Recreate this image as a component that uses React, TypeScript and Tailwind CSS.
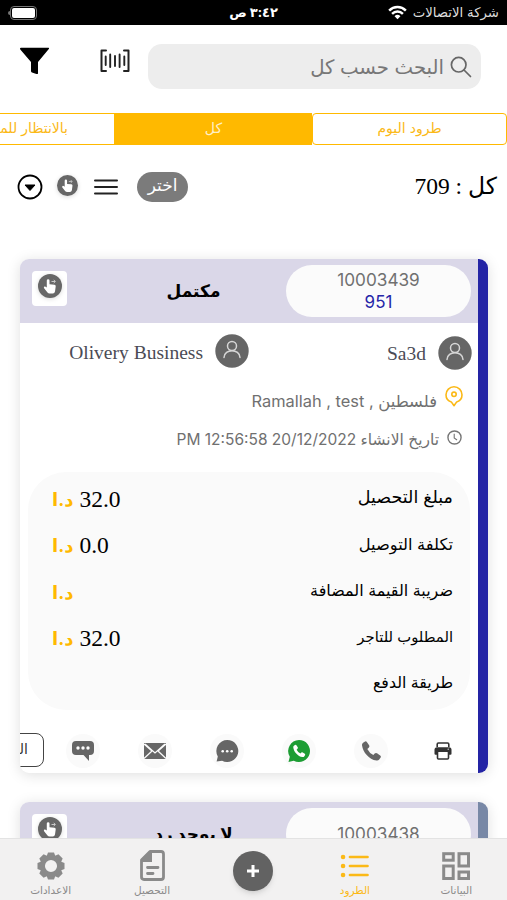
import type { ReactNode } from "react";
import clsx from "clsx";

/* ---------- icons ---------- */

const FilterIcon = () => (
  <svg viewBox="0 0 30 28" className="h-7 w-[30px]">
    <path d="M0 1.500Q0 .8 1 .8H28.500Q29.300.8 29 1.800L18 15V26.500Q17.600 27.300 16.500 27L12 25.500Q11 25 11 24V15L.3 2.500Z" fill="#000" />
  </svg>
);

const BarcodeIcon = () => (
  <svg viewBox="0 0 30 24" className="h-6 w-[30px]" fill="none" stroke="#222" strokeWidth="2" strokeLinecap="round" strokeLinejoin="round">
    <path d="M6 1.500H1.500V22H6M24 1.500H28.500V22H24" />
    <path d="M5.700 7.500V16M10.200 5.500V18M15 7V17M19.600 5.500V18M24.300 7.500V16" strokeWidth="1.900" />
  </svg>
);

const WifiIcon = () => (
  <svg viewBox="0 0 20 15" className="h-[15px] w-[19px]" fill="none" stroke="#fff" strokeWidth="2.600">
    <path d="M1.200 5.400a12.500 12.500 0 0 1 17.600 0M4.300 8.900a8 8 0 0 1 11.400 0" />
    <path d="M10 14.500 6.900 11.500a4.400 4.400 0 0 1 6.200 0Z" fill="#fff" stroke="none" />
  </svg>
);

const SearchIcon = () => (
  <svg viewBox="0 0 22 22" className="h-[22px] w-[22px]" fill="none" stroke="#666" strokeWidth="1.700" strokeLinecap="round">
    <circle cx="8.700" cy="8.700" r="7.300" />
    <path d="m14 14 6.500 6.500" />
  </svg>
);

const HandIcon = ({ className }: { className?: string }) => (
  <svg viewBox="0 0 24 24" className={clsx("drop-shadow-sm", className)}>
    <circle cx="12" cy="12" r="12" fill="#676767" />
    <path d="M8.800 6.500a1.350 1.350 0 0 1 2.700 0V10.200l5 .5q1.400.3 1.200 1.700L17 17.500q-.4 1.900-2.200 1.900h-3.300q-1.200 0-2-.9l-3.400-4.200q-.7-1.200.3-1.800.8-.4 2.400 1Z" fill="#fff" />
    <path d="M13.500 7.500h3.600M15.700 5.800l1.700 1.700-1.700 1.500" fill="none" stroke="#c8c8c8" strokeWidth="1" />
  </svg>
);

const UserIcon = () => (
  <svg viewBox="0 0 34 34" className="h-[34px] w-[34px] shrink-0">
    <circle cx="17" cy="17" r="16.700" fill="#666" />
    <g fill="none" stroke="#d6d6d6" strokeWidth="1.500" strokeLinecap="round">
      <circle cx="17" cy="12" r="4.500" />
      <path d="M9 23.500c.3-9 15.700-9 16 0" />
    </g>
  </svg>
);

const PinIcon = () => (
  <svg viewBox="0 0 18 21" className="h-[21px] w-[18px]" fill="none" stroke="#fbb917" strokeWidth="1.600" strokeLinejoin="round">
    <path d="M9 19.700 6.300 15.900C3 15 1 12 1 8.800a8 8 0 0 1 16 0c0 3.200-2 6.200-5.300 7.100Z" />
    <circle cx="9" cy="8.300" r="2.200" />
  </svg>
);

const ClockIcon = () => (
  <svg viewBox="0 0 16 16" className="h-[15px] w-[15px]" fill="none" stroke="#777" strokeWidth="1.500">
    <circle cx="8" cy="8" r="7" />
    <path d="M7.700 4v4.500l3 2.200" strokeWidth="1.200" />
  </svg>
);

const PrinterIcon = () => (
  <svg viewBox="0 0 18 18" className="h-[18px] w-[18px]">
    <path d="M3.200 5V2.200Q3.200 1 4.400 1h9.200q1.200 0 1.200 1.200V5" fill="none" stroke="#333" strokeWidth="1.600" />
    <path d="M3 5.300h12q2.500 0 2.500 2.500v4q0 1-1 1h-15q-1 0-1-1v-4Q.5 5.300 3 5.300Z" fill="#333" />
    <rect x="3.500" y="9.200" width="11" height="7.800" rx="1" fill="#fff" stroke="#333" strokeWidth="1.600" />
    <circle cx="14.200" cy="7.200" r=".6" fill="#fff" />
  </svg>
);

const PHONE = "M1 4.200Q.7 2.500 2 1.600L3.500.6q1.300-.8 2.200.5l2 3q.7 1.200-.4 2.200L6 7.500q1.900 3.800 5.700 5.700l1.300-1.300q1-1 2.200-.2l3 2q1.200.9.3 2.200l-1.200 1.700q-1 1.200-2.600.9C7.500 17.500 1.800 10.500 1 4.200Z";

const PhoneIcon = () => (
  <svg viewBox="0 0 19 19" className="h-[20px] w-[20px]">
    <path d={PHONE} fill="#666" />
  </svg>
);

const WhatsappIcon = () => (
  <svg viewBox="0 0 24 24" className="h-6 w-6">
    <path d="M12 1a11 11 0 1 1-5.200 20.700L1.500 23l1.300-5.300A11 11 0 0 1 12 1Z" fill="#1d9d34" />
    <path d={PHONE} fill="#fff" transform="translate(5.600 5.600) scale(.67)" />
  </svg>
);

const ChatIcon = () => (
  <svg viewBox="0 0 24 24" className="h-6 w-6">
    <path d="M12.300 1a11 11 0 1 1-5.200 20.700L1.600 22.500 2.800 17.500A11 11 0 0 1 12.300 1Z" fill="#666" />
    <g fill="#fff">
      <circle cx="7.700" cy="12.300" r="1.300" />
      <circle cx="12.200" cy="12.300" r="1.300" />
      <circle cx="16.700" cy="12.300" r="1.300" />
    </g>
  </svg>
);

const MailIcon = () => (
  <svg viewBox="0 0 24 18" className="h-[18px] w-6">
    <rect x="1" y="1" width="22" height="16" fill="#666" />
    <path d="m1 2 8 7-8 7.500M23 2l-8 7 8 7.500M2 2l10 9 10-9" fill="none" stroke="#fafafa" strokeWidth="1.300" />
  </svg>
);

const SmsIcon = () => (
  <svg viewBox="0 0 24 22" className="h-[22px] w-6">
    <path d="M5 1h14q4 0 4 4v6q0 4-4 4h-1v6L12.500 15H5q-4 0-4-4V5q0-4 4-4Z" fill="#666" />
    <g fill="#fff">
      <circle cx="7" cy="8" r="1.700" />
      <circle cx="12" cy="8" r="1.700" />
      <circle cx="17" cy="8" r="1.700" />
    </g>
  </svg>
);

const GearIcon = () => (
  <svg viewBox="-14 -14 28 28" className="h-7 w-7" fill="#8a8a8a">
    {[0, 45, 90, 135, 180, 225, 270, 315].map((a) => (
      <path key={a} d="M-4.700-9 -3-13.500H3L4.700-9Z" transform={`rotate(${a})`} />
    ))}
    <circle r="8.300" fill="none" stroke="#8a8a8a" strokeWidth="4.500" />
  </svg>
);

const InvoiceIcon = () => (
  <svg viewBox="0 0 25 31" className="h-[31px] w-[25px]">
    <path d="M10 1.500h11q2.500 0 2.500 2.500v23q0 2.500-2.500 2.500H4q-2.500 0-2.500-2.500V10Z" fill="none" stroke="#8a8a8a" strokeWidth="2.800" strokeLinejoin="round" />
    <path d="M12 1v11H1V9.500L9.500 1Z" fill="#8a8a8a" />
    <path d="M7.500 17.500H18M7.500 23.500h5.500" stroke="#8a8a8a" strokeWidth="2.800" strokeLinecap="round" />
  </svg>
);

const ListIcon = () => (
  <svg viewBox="0 0 29 24" className="h-6 w-[29px]" stroke="#fbb917" strokeWidth="2.700" strokeLinecap="round">
    <path d="M10 3h17.500M10 12h17.500M10 21h17.500" />
    <path d="M3 3h.1M3 12h.1M3 21h.1" strokeWidth="4.500" />
  </svg>
);

const DashboardIcon = () => (
  <svg viewBox="0 0 28 28" className="h-7 w-7" fill="none" stroke="#8a8a8a" strokeWidth="3">
    <rect x="1.700" y="1.700" width="9.500" height="6.500" />
    <rect x="17" y="1.700" width="9.500" height="12.300" />
    <rect x="1.700" y="14" width="9.500" height="12.500" />
    <rect x="17" y="20" width="9.500" height="6.500" />
  </svg>
);

/* ---------- data ---------- */

const amounts = [
  { label: "مبلغ التحصيل", value: "32.0", currency: true, size: "text-[17.5px]" },
  { label: "تكلفة التوصيل", value: "0.0", currency: true, size: "text-[16.3px]" },
  { label: "ضريبة القيمة المضافة", value: "", currency: true, size: "text-[16px]" },
  { label: "المطلوب للتاجر", value: "32.0", currency: true, size: "text-[14.8px]" },
  { label: "طريقة الدفع", value: "", currency: false, size: "text-[15.8px]" },
];

const actions = [
  { name: "print", icon: <PrinterIcon />, bg: "bg-white" },
  { name: "call", icon: <PhoneIcon />, bg: "bg-[#fafafa]" },
  { name: "whatsapp", icon: <WhatsappIcon />, bg: "bg-[#fafafa]" },
  { name: "chat", icon: <ChatIcon />, bg: "bg-[#fafafa]" },
  { name: "mail", icon: <MailIcon />, bg: "bg-[#fafafa]" },
  { name: "sms", icon: <SmsIcon />, bg: "bg-[#fafafa]" },
];

/* ---------- pieces ---------- */

function CardHeader({ id, code, status }: { id: string; code?: string; status: string }) {
  return (
    <div className="flex h-16 items-start bg-[#dad7e8] pt-1.5 pr-[7px]">
      <div className="flex h-[52px] w-[185px] flex-col items-center justify-center rounded-[27px] bg-[#fbfbfb] text-[17.2px] leading-[22px] text-[#707070]">
        <span>{id}</span>
        {code && <span className="text-[17px] text-[#2626a8]">{code}</span>}
      </div>
      <div className="flex h-[54px] flex-1 items-center justify-center pl-px text-[17px] font-bold text-black">
        <span className="mr-[-14px]">{status}</span>
      </div>
      <div className="mt-1.5 mr-[19px] ml-3 flex h-[35px] w-[35px] justify-center rounded bg-white pt-[3px]">
        <HandIcon className="h-6 w-6" />
      </div>
    </div>
  );
}

function Card({ accent, children }: { accent: string; children: ReactNode }) {
  return (
    <section className="mr-[19px] ml-5 flex shrink-0 overflow-hidden rounded-[9px] bg-white shadow-[0_2px_14px_rgba(0,0,0,0.13)]">
      <div className={clsx("w-2.5 shrink-0", accent)} />
      <div className="min-w-0 flex-1">{children}</div>
    </section>
  );
}

function NavItem({ icon, label, active }: { icon: ReactNode; label: string; active?: boolean }) {
  return (
    <div className={clsx("flex flex-1 flex-col items-center", active ? "text-[#fbb917]" : "text-[#8a8a8a]")}>
      <div className="flex h-[31px] items-center">{icon}</div>
      <span className="mt-0.5 text-[10.5px] leading-4 whitespace-nowrap">{label}</span>
    </div>
  );
}

export default function App() {
  return (
    <div dir="rtl" className="flex h-[900px] w-[507px] flex-col overflow-hidden bg-white font-['Inter','DejaVu_Sans',sans-serif]">
      {/* Status bar */}
      <div className="grid h-[25px] shrink-0 grid-cols-3 items-center bg-black px-2 text-white">
        <div className="flex items-center gap-1.5 text-[13.3px] whitespace-nowrap text-[#ddd]">
          <span>شركة الاتصالات</span>
          <WifiIcon />
        </div>
        <div className="text-center text-[13px] font-bold">٣:٤٢ ص</div>
        <div className="flex items-center justify-end">
          <div className="h-3.5 w-[27px] rounded border border-[#777] p-px">
            <div className="h-full w-full rounded-[2px] bg-white" />
          </div>
          <div className="h-1 w-0.5 rounded-l bg-[#777]" />
        </div>
      </div>

      {/* Search */}
      <div className="flex h-[88px] shrink-0 items-start pt-[19px] pr-[26px] pl-5">
        <div className="flex h-[45px] w-[333px] items-center rounded-[14px] bg-[#ededed] pr-[9px] text-[19.7px] text-[#777]">
          <SearchIcon />
          <span className="pt-0.5 pr-1.5">البحث حسب كل</span>
        </div>
        <div className="mt-[5px] mr-[18px]">
          <BarcodeIcon />
        </div>
        <div className="mt-[3px] mr-auto">
          <FilterIcon />
        </div>
      </div>

      {/* Tabs */}
      <div className="flex h-8 shrink-0 text-[14px] text-[#fbb917]">
        <div className="flex w-[195px] shrink-0 items-center justify-center rounded border border-[#ffb900] pb-[3px]">طرود اليوم</div>
        <div className="flex w-[197px] shrink-0 items-center justify-center bg-[#ffb900] pb-[3px] text-[#fff0c8]">كل</div>
        <div className="flex w-[197px] shrink-0 items-center border border-[#ffb900] pr-[46px] pb-[3px] whitespace-nowrap">بالانتظار للموافقة</div>
      </div>

      {/* Toolbar */}
      <div className="flex h-[84px] shrink-0 items-center justify-between pr-[10px] pl-[17px]">
        <div className="font-['Liberation_Serif','DejaVu_Sans',serif] text-[23.5px]">كل : 709</div>
        <div className="flex items-center">
          <div className="flex h-[30px] w-[51px] items-center justify-center rounded-full bg-[#7b7b7b] pb-0.5 text-[17px] text-white">اختر</div>
          <svg viewBox="0 0 24 16" className="mr-[19px] h-4 w-6" stroke="#222" strokeWidth="2" strokeLinecap="round">
            <path d="M1 1.500h22M1 8h22M1 14.500h22" />
          </svg>
          <HandIcon className="mr-4 mb-1 h-[21px] w-[21px]" />
          <svg viewBox="0 0 26 26" className="mr-[14px] h-[26px] w-[26px]">
            <circle cx="13" cy="13" r="11.500" fill="none" stroke="#000" strokeWidth="1.800" />
            <path d="M8 11h10l-5 5.500Z" stroke="#000" strokeLinejoin="round" />
          </svg>
        </div>
      </div>

      {/* Parcels */}
      <main className="flex min-h-0 flex-1 flex-col gap-[29px] overflow-hidden pt-[30px]">
        <Card accent="bg-[#2424a5]">
          <CardHeader id="10003439" code="951" status="مكتمل" />
          <div className="flex h-[60px] items-start pr-1.5 font-['Liberation_Serif',serif] text-[19.5px] text-[#4b4b55]">
            <div className="mt-[13px] flex w-[223px] items-center">
              <UserIcon />
              <span className="mt-0.5 mr-3">Sa3d</span>
            </div>
            <div className="mt-[11px] flex items-center">
              <UserIcon />
              <span className="mt-1 mr-3">Olivery Business</span>
            </div>
          </div>
          <div className="flex h-9 items-center pr-[15px] text-[16.4px] text-[#707070]">
            <div className="mb-2.5">
              <PinIcon />
            </div>
            <span className="mr-2">فلسطين , Ramallah , test</span>
          </div>
          <div className="flex h-[53px] items-start pt-[9px] pr-4 text-[15.5px] text-[#707070]">
            <div className="pt-0.5">
              <ClockIcon />
            </div>
            <span className="mr-2 whitespace-nowrap">تاريخ الانشاء 20/12/2022 12:56:58 PM</span>
          </div>
          <div className="mr-2 ml-2 h-[238px] rounded-[38px] bg-[#fafafa] pt-[4px] pr-[17px] pl-6">
            {amounts.map((row) => (
              <div key={row.label} className="flex h-[46.500px] items-center justify-between text-black">
                <span className={clsx("mb-1", row.size)}>{row.label}</span>
                {row.currency && (
                  <span className="flex items-center gap-1.5">
                    <span className="font-['Liberation_Serif',serif] text-[23.5px]">{row.value}</span>
                    <span className="text-[18px] font-bold text-[#ffb900]">د.ا</span>
                  </span>
                )}
              </div>
            ))}
          </div>
          <div className="flex h-[63px] items-start gap-[38px] overflow-hidden pt-[24px] pr-[18px]">
            {actions.map((action) => (
              <div key={action.name} className={clsx("flex h-[34px] w-[34px] shrink-0 items-center justify-center rounded-full", action.bg)}>
                {action.icon}
              </div>
            ))}
            <div className="-mt-px -mr-[16px] h-[34px] w-[100px] shrink-0 rounded-lg border-[1.500px] border-[#444] pr-[15px] text-[14px] leading-[30px] text-[#333]">المزيد</div>
          </div>
        </Card>
        <Card accent="bg-[#7888a6]">
          <CardHeader id="10003438" status="لا يوجد رد" />
          <div className="h-40" />
        </Card>
      </main>

      {/* Bottom navigation */}
      <nav className="relative flex h-[62px] shrink-0 border-t border-[#e3e3e3] bg-[#f2f1f1] pt-[11px]">
        <NavItem icon={<DashboardIcon />} label="البيانات" />
        <NavItem icon={<ListIcon />} label="الطرود" active />
        <div className="flex flex-1 justify-center">
          <div className="mt-px flex h-10 w-10 items-center justify-center rounded-full bg-[#626262] shadow-md">
            <svg viewBox="0 0 14 14" className="h-3.5 w-3.5" stroke="#fff" strokeWidth="3">
              <path d="M7 1v12M1 7h12" />
            </svg>
          </div>
        </div>
        <NavItem icon={<InvoiceIcon />} label="التحصيل" />
        <NavItem icon={<GearIcon />} label="الاعدادات" />
      </nav>
    </div>
  );
}
